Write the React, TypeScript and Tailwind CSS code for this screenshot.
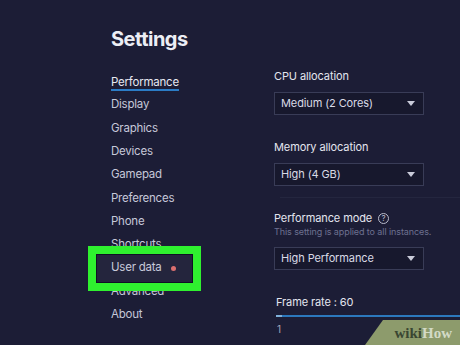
import React from 'react';

const navItems = [
  'Performance',
  'Display',
  'Graphics',
  'Devices',
  'Gamepad',
  'Preferences',
  'Phone',
  'Shortcuts',
  'User data',
  'Advanced',
  'About',
];

const Caret = () => (
  <svg width="8" height="5" viewBox="0 0 8 5" className="shrink-0">
    <path d="M0 0 L8 0 L4 5 Z" fill="#c9cbd9" />
  </svg>
);

const Select: React.FC<{ value: string }> = ({ value }) => (
  <div className="w-[150px] h-[23px] border border-[#393c57] bg-[#17182d] flex items-center justify-between pl-[6px] pr-[8px]">
    <span className="text-[11px] text-[#d9dae6] tracking-[-0.01em]">{value}</span>
    <Caret />
  </div>
);

const Label: React.FC<{ children: React.ReactNode }> = ({ children }) => (
  <div className="text-[11px] leading-[16px] text-[#e4e5ef] tracking-[-0.01em] flex items-center">{children}</div>
);

export default function App() {
  return (
    <div className="relative w-[460px] h-[345px] overflow-hidden bg-[#1c1d36] font-['Inter',sans-serif]">
      <div className="flex pl-[111px]">
        {/* left nav */}
        <div className="w-[163px] flex flex-col">
          <h1 className="pt-[27px] text-[20px] leading-[24px] font-bold tracking-tight text-[#eceef5]">Settings</h1>
          <nav className="mt-[19px] flex flex-col">
            {navItems.map((item, i) => (
              <div key={item} className="h-[23.3px] flex items-center text-[11.5px] tracking-[-0.02em] text-[#c6c8d9]">
                {i === 0 ? (
                  <span className="text-[#e6e8f2] border-b-2 border-[#2b7cc6] leading-[14px] mt-[2px]">{item}</span>
                ) : (
                  <span>{item}</span>
                )}
                {item === 'User data' && <span className="ml-[9px] w-[5px] h-[5px] rounded-full bg-[#d96a6a]" />}
              </div>
            ))}
          </nav>
        </div>

        {/* right panel */}
        <div className="flex-1 pt-[68px] flex flex-col">
          <Label>CPU allocation</Label>
          <div className="mt-[8px]">
            <Select value="Medium (2 Cores)" />
          </div>

          <div className="mt-[24px]">
            <Label>Memory allocation</Label>
          </div>
          <div className="mt-[8px]">
            <Select value="High (4 GB)" />
          </div>

          <div className="mt-[11px] ml-[6px] h-px bg-[#24263f]" />

          <div className="mt-[12px]">
            <Label>
              Performance mode
              <span className="ml-[6px] w-[11px] h-[11px] rounded-full border border-[#b9bbcc] text-[8px] leading-[9px] text-center text-[#b9bbcc]">?</span>
            </Label>
          </div>
          <div className="text-[9px] leading-[12px] text-[#6d7090] tracking-[-0.01em]">This setting is applied to all instances.</div>
          <div className="mt-[9px]">
            <Select value="High Performance" />
          </div>

          <div className="mt-[24px] pl-[2px]">
            <Label>Frame rate : 60</Label>
          </div>
          <div className="mt-[5px] ml-[2px] h-[2px] bg-[#2c78bd] flex">
            <div className="w-[6px] h-[2px] bg-[#7fb0da]" />
          </div>
          <div className="mt-[6px] ml-[3px] text-[10px] leading-[12px] text-[#a6a8bd]">1</div>
        </div>
      </div>

      {/* highlight annotation */}
      <div className="absolute left-[88px] top-[246px] w-[113px] h-[45px] border-[8px] border-[#2ff12f] bg-white/[0.04] shadow-[inset_0_0_0_1px_#0f1124]" />

      {/* watermark */}
      <div className="absolute right-0 bottom-0 w-[95px] h-[25px] bg-[#8d9b6c] [clip-path:polygon(18px_0,100%_0,100%_100%,0_100%)] flex items-center justify-end pr-[8px]">
        <span className="font-['Liberation_Serif',serif] font-bold text-[15px] leading-[18px]">
          <span className="text-[#3a4632]">wiki</span>
          <span className="text-[#d3dac6]">How</span>
        </span>
      </div>
    </div>
  );
}
